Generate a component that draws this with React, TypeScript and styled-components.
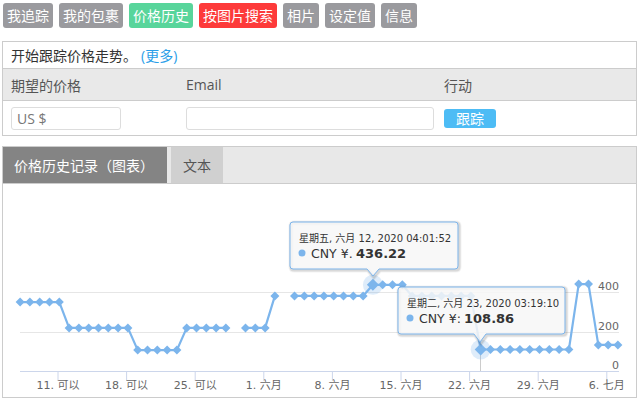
import React from "react";
import styled, { createGlobalStyle } from "styled-components";

const GlobalStyle = createGlobalStyle`
  html, body { margin: 0; padding: 0; background: #fff; }
  body { font-family: "Open Sans", "Noto Sans CJK SC", sans-serif; }
  * { box-sizing: border-box; }
`;

const Page = styled.div`
  width: 640px;
  padding: 3px 0 0 2px;
`;

const Nav = styled.div`
  display: flex;
  gap: 6px;
  padding-left: 1px;
`;

const NavButton = styled.div<{ $bg: string }>`
  height: 25px;
  line-height: 25px;
  padding: 0 4px;
  font-size: 14px;
  color: #fff;
  border-radius: 3px;
  background: ${(p) => p.$bg};
  font-family: "Noto Sans CJK SC", sans-serif;
`;

const Panel = styled.div<{ $mt: number }>`
  width: 635px;
  margin-top: ${(p) => p.$mt}px;
  border: 1px solid #ccc;
`;

const IntroRow = styled.div`
  height: 27px;
  line-height: 27px;
  padding-left: 8px;
  font-size: 14px;
  color: #333;
  border-bottom: 1px solid #ccc;
`;

const More = styled.span`
  color: #2a9ee8;
  margin-left: 4px;
`;

const GridRow = styled.div<{ $head?: boolean }>`
  display: grid;
  grid-template-columns: 175px 258px 1fr;
  align-items: center;
  padding-left: 8px;
  height: ${(p) => (p.$head ? 32 : 34)}px;
  background: ${(p) => (p.$head ? "#e9e9e9" : "#fff")};
  border-bottom: ${(p) => (p.$head ? "1px solid #ccc" : "none")};
  font-size: 14px;
  color: #555;
`;

const TextInput = styled.input<{ $w: number }>`
  width: ${(p) => p.$w}px;
  height: 23px;
  border: 1px solid #ddd;
  border-radius: 3px;
  padding: 0 5px;
  font-family: "Open Sans", "Noto Sans CJK SC", sans-serif;
  font-size: 14px;
  color: #666;
  outline: none;
  &::placeholder { color: #777; }
`;

const TrackButton = styled.div`
  width: 52px;
  height: 19px;
  line-height: 19px;
  text-align: center;
  background: #4dbcf5;
  color: #fff;
  font-size: 14px;
  border-radius: 3px;
  font-family: "Noto Sans CJK SC", sans-serif;
`;

const TabBar = styled.div`
  display: flex;
  gap: 4px;
  height: 37px;
  background: #e8e8e8;
  border-bottom: 1px solid #ccc;
`;

const Tab = styled.div<{ $active?: boolean; $w: number }>`
  width: ${(p) => p.$w}px;
  height: 36px;
  line-height: 36px;
  font-size: 14px;
  background: ${(p) => (p.$active ? "#848484" : "#d0d0d0")};
  color: ${(p) => (p.$active ? "#fff" : "#555")};
  padding-left: ${(p) => (p.$active ? 11 : 0)}px;
  text-align: ${(p) => (p.$active ? "left" : "center")};
  font-family: "Noto Sans CJK SC", sans-serif;
`;

const ChartArea = styled.div`
  height: 213px;
  position: relative;
`;

const ChartSvg = styled.svg`
  display: block;
`;

const navItems: [string, string][] = [
  ["我追踪", "#9a9a9e"],
  ["我的包裹", "#9a9a9e"],
  ["价格历史", "#58d59b"],
  ["按图片搜索", "#fd3a3a"],
  ["相片", "#9a9a9e"],
  ["设定值", "#9a9a9e"],
  ["信息", "#9a9a9e"],
];

// values per day starting May 7
const vals: (number | null)[] = [];
const push = (v: number | null, n: number) => {
  for (let i = 0; i < n; i++) vals.push(v);
};
push(349, 5);
push(218, 7);
push(106, 5);
push(218, 5);
push(null, 1);
push(218, 3);
push(380, 1);
push(null, 1);
push(380, 8);
push(436.22, 4);
push(380, 7);
push(108.86, 10);
push(440, 2);
push(132, 3);

const px = (d: number) => 59.3 + (d - 4) * 9.8;
const py = (v: number) => 371 - v * 0.1975;

const segments: string[] = [];
{
  let cur = "";
  vals.forEach((v, d) => {
    if (v === null) {
      if (cur) segments.push(cur);
      cur = "";
    } else {
      cur += (cur ? " L " : "M ") + px(d).toFixed(1) + " " + py(v).toFixed(1);
    }
  });
  if (cur) segments.push(cur);
}

const diamond = (x: number, y: number, r: number) =>
  `M ${x} ${y - r} L ${x + r} ${y} L ${x} ${y + r} L ${x - r} ${y} Z`;

const ticks = ["11. 可以", "18. 可以", "25. 可以", "1. 六月", "8. 六月", "15. 六月", "22. 六月", "29. 六月", "6. 七月"];

const tipPath = (l: number, t: number, r: number, b: number, tx: number, ty: number) =>
  `M ${l + 3} ${t} H ${r - 3} Q ${r} ${t} ${r} ${t + 3} V ${b - 3} Q ${r} ${b} ${r - 3} ${b} H ${tx + 6} L ${tx} ${ty} L ${tx - 6} ${b} H ${l + 3} Q ${l} ${b} ${l} ${b - 3} V ${t + 3} Q ${l} ${t} ${l + 3} ${t} Z`;

const Tooltip: React.FC<{
  l: number; t: number; r: number; b: number; tx: number; ty: number;
  date: string; label: string; value: string; labelW: number;
}> = ({ l, t, r, b, tx, ty, date, label, value, labelW }) => {
  const d = tipPath(l, t, r, b, tx, ty);
  return (
    <g>
      <path d={d} fill="none" stroke="#000" strokeOpacity={0.05} strokeWidth={5} transform="translate(1,1)" />
      <path d={d} fill="none" stroke="#000" strokeOpacity={0.1} strokeWidth={3} transform="translate(1,1)" />
      <path d={d} fill="#f7f7f7" fillOpacity={0.85} stroke="#7cb5ec" strokeWidth={1} />
      <text x={l + 9} y={t + 20} fontSize={10} fill="#333" fontFamily='"DejaVu Sans", "Noto Sans CJK SC", sans-serif'>
        {date}
      </text>
      <circle cx={l + 12} cy={t + 31} r={3.5} fill="#7cb5ec" />
      <text x={l + 21} y={t + 36} fontSize={12.5} fill="#333" fontFamily='"DejaVu Sans", "Noto Sans CJK SC", sans-serif'>
        {label}
        <tspan x={l + 21 + labelW} fontWeight="bold" fontSize={13}>
          {value}
        </tspan>
      </text>
    </g>
  );
};

const Chart: React.FC = () => {
  const font = '"DejaVu Sans", "Noto Sans CJK SC", sans-serif';
  return (
    <ChartSvg width={633} height={213} viewBox="3 184 633 213">
      <line x1={20} x2={619} y1={292.5} y2={292.5} stroke="#e6e6e6" />
      <line x1={20} x2={619} y1={332.5} y2={332.5} stroke="#e6e6e6" />
      <line x1={20} x2={619} y1={371.5} y2={371.5} stroke="#ccd6eb" />
      {ticks.map((t, i) => {
        const x = 58 + i * 68.6;
        return (
          <g key={t}>
            <line x1={x} x2={x} y1={372} y2={381} stroke="#ccd6eb" />
            <text x={x} y={389} textAnchor="middle" fontSize={11} fill="#666" fontFamily={font}>
              {t}
            </text>
          </g>
        );
      })}
      <text x={619} y={290} textAnchor="end" fontSize={11} fill="#666" fontFamily={font}>400</text>
      <text x={619} y={330} textAnchor="end" fontSize={11} fill="#666" fontFamily={font}>200</text>
      <text x={619} y={369} textAnchor="end" fontSize={11} fill="#666" fontFamily={font}>0</text>
      <line x1={480.5} x2={480.5} y1={350} y2={371} stroke="#cccccc" />
      {segments.map((s, i) => (
        <path key={i} d={s} fill="none" stroke="#7cb5ec" strokeWidth={2.2} strokeLinejoin="round" />
      ))}
      <circle cx={px(36)} cy={py(436.22)} r={10} fill="#7cb5ec" fillOpacity={0.25} />
      <circle cx={px(47)} cy={py(108.86)} r={10} fill="#7cb5ec" fillOpacity={0.25} />
      {vals.map((v, d) =>
        v === null ? null : (
          <path
            key={d}
            d={diamond(px(d), py(v), d === 36 || d === 47 ? 6 : 4.5)}
            fill="#7cb5ec"
          />
        )
      )}
      <Tooltip l={290} t={222} r={458} b={269} tx={373} ty={276}
        date="星期五, 六月 12, 2020 04:01:52" label="CNY ¥. " value="436.22" labelW={45} />
      <Tooltip l={398} t={287} r={565} b={334} tx={480} ty={342}
        date="星期二, 六月 23, 2020 03:19:10" label="CNY ¥: " value="108.86" labelW={45} />
    </ChartSvg>
  );
};

export default function App() {
  return (
    <Page>
      <GlobalStyle />
      <Nav>
        {navItems.map(([t, c]) => (
          <NavButton key={t} $bg={c}>{t}</NavButton>
        ))}
      </Nav>
      <Panel $mt={13}>
        <IntroRow>
          开始跟踪价格走势。<More>(更多)</More>
        </IntroRow>
        <GridRow $head>
          <span>期望的价格</span>
          <span>Email</span>
          <span>行动</span>
        </GridRow>
        <GridRow>
          <TextInput $w={110} placeholder="US $" />
          <TextInput $w={248} />
          <TrackButton>跟踪</TrackButton>
        </GridRow>
      </Panel>
      <Panel $mt={10}>
        <TabBar>
          <Tab $active $w={164}>价格历史记录（图表）</Tab>
          <Tab $w={52}>文本</Tab>
        </TabBar>
        <ChartArea>
          <Chart />
        </ChartArea>
      </Panel>
    </Page>
  );
}
